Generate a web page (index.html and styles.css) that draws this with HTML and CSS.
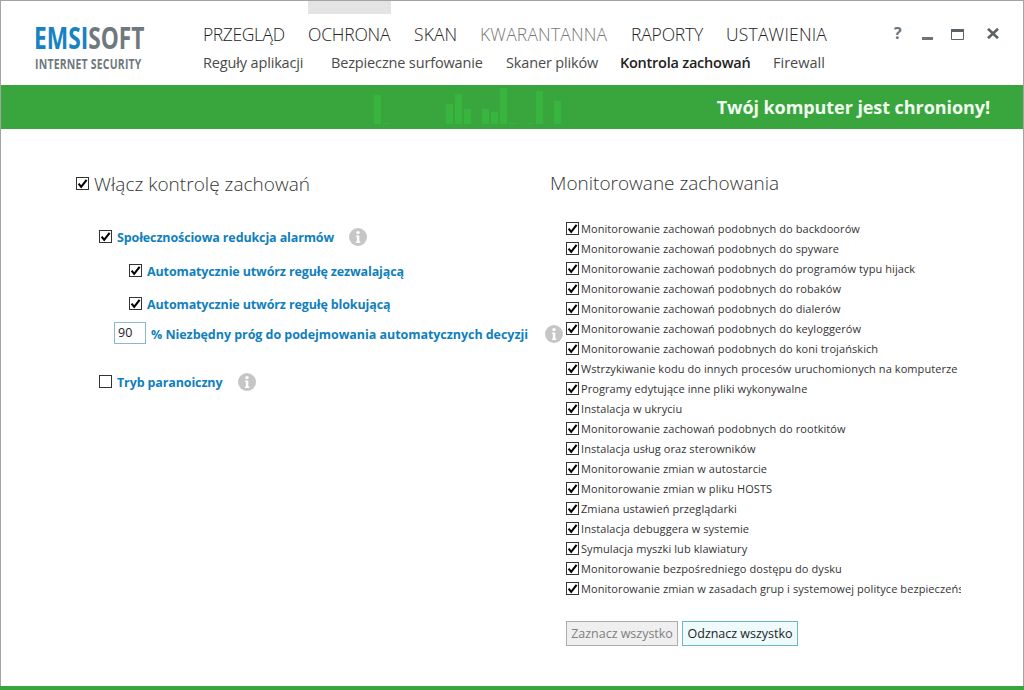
FILE: index.html
```html
<!DOCTYPE html>
<html lang="pl">
<head>
<meta charset="utf-8">
<title>Emsisoft Internet Security</title>
<link rel="stylesheet" href="styles.css">
</head>
<body>
<svg class="defs" width="0" height="0" aria-hidden="true">
  <symbol id="chk" viewBox="0 0 13 13"><path d="M2.6 6.6 5.2 9.8 10.6 2.9" fill="none" stroke="#000" stroke-width="2.1"/></symbol>
  <symbol id="info" viewBox="0 0 18 18"><circle cx="9" cy="9" r="9" fill="#c6c6c6"/><circle cx="9" cy="4.6" r="1.7" fill="#fff"/><path d="M6.9 7.6h3.4v6h1v1.4H6.9v-1.4h1v-4.6h-1z" fill="#fff"/></symbol>
</svg>
<div class="window">
  <header class="top">
    <div class="logo">
      <div class="logo-main"><span class="blue">EMSI</span>SOFT</div>
      <div class="logo-sub">INTERNET SECURITY</div>
    </div>
    <div class="navs">
      <nav class="nav">
        <a class="n1">PRZEGLĄD</a>
        <a class="n2 on">OCHRONA</a>
        <a class="n3">SKAN</a>
        <a class="n4 dim">KWARANTANNA</a>
        <a class="n5">RAPORTY</a>
        <a class="n6">USTAWIENIA</a>
      </nav>
      <nav class="sub">
        <a class="s1">Reguły aplikacji</a>
        <a class="s2">Bezpieczne surfowanie</a>
        <a class="s3">Skaner plików</a>
        <a class="s4 cur">Kontrola zachowań</a>
        <a class="s5">Firewall</a>
      </nav>
    </div>
    <div class="ctrls">
      <span class="help">?</span>
      <svg class="c-min" width="11" height="3"><rect width="11" height="3" fill="#6d7478"/></svg>
      <svg class="c-max" width="13" height="11"><path d="M.5.5h12v10H.5z" fill="none" stroke="#5b6367"/><rect width="13" height="3" fill="#5b6367"/></svg>
      <svg class="c-close" width="12" height="11" viewBox="0 0 12 11"><path d="M1 .8 11 10.2M11 .8 1 10.2" stroke="#5b6367" stroke-width="2.6" fill="none"/></svg>
    </div>
  </header>

  <section class="banner">
    <div class="bars">
      <i style="height:29px"></i><i style="height:1px"></i><i style="height:0"></i><i style="height:0"></i><i style="height:0"></i><i style="height:0"></i><i style="height:0"></i><i style="height:0"></i>
      <i style="height:20px"></i><i style="height:30px"></i><i style="height:15px"></i><i style="height:0"></i><i style="height:15px"></i><i style="height:12px"></i><i style="height:36px"></i><i style="height:1px"></i><i style="height:0"></i><i style="height:1px"></i><i style="height:33px"></i><i style="height:0"></i><i style="height:23px"></i>
    </div>
    <h1 class="status">Twój komputer jest chroniony!</h1>
  </section>

  <main class="content">
    <section class="left">
      <label class="master"><span class="cb"><svg><use href="#chk"/></svg></span><span>Włącz kontrolę zachowań</span></label>
      <div class="opt opt-a"><span class="cb"><svg><use href="#chk"/></svg></span><b class="lbl">Społecznościowa redukcja alarmów</b><svg class="info i-a"><use href="#info"/></svg></div>
      <div class="opt opt-b"><span class="cb"><svg><use href="#chk"/></svg></span><b class="lbl">Automatycznie utwórz regułę zezwalającą</b></div>
      <div class="opt opt-c"><span class="cb"><svg><use href="#chk"/></svg></span><b class="lbl">Automatycznie utwórz regułę blokującą</b></div>
      <div class="opt opt-d"><span class="num">90</span><b class="lbl lbl-d">% Niezbędny próg do podejmowania automatycznych decyzji</b><svg class="info i-d"><use href="#info"/></svg></div>
      <div class="opt opt-e"><span class="cb"></span><b class="lbl">Tryb paranoiczny</b><svg class="info i-e"><use href="#info"/></svg></div>
    </section>
    <section class="right">
      <h2 class="r-title">Monitorowane zachowania</h2>
      <ul class="list">
        <li><span class="cb"><svg><use href="#chk"/></svg></span><span class="t">Monitorowanie zachowań podobnych do backdoorów</span></li>
        <li><span class="cb"><svg><use href="#chk"/></svg></span><span class="t">Monitorowanie zachowań podobnych do spyware</span></li>
        <li><span class="cb"><svg><use href="#chk"/></svg></span><span class="t">Monitorowanie zachowań podobnych do programów typu hijack</span></li>
        <li><span class="cb"><svg><use href="#chk"/></svg></span><span class="t">Monitorowanie zachowań podobnych do robaków</span></li>
        <li><span class="cb"><svg><use href="#chk"/></svg></span><span class="t">Monitorowanie zachowań podobnych do dialerów</span></li>
        <li><span class="cb"><svg><use href="#chk"/></svg></span><span class="t">Monitorowanie zachowań podobnych do keyloggerów</span></li>
        <li><span class="cb"><svg><use href="#chk"/></svg></span><span class="t">Monitorowanie zachowań podobnych do koni trojańskich</span></li>
        <li><span class="cb"><svg><use href="#chk"/></svg></span><span class="t">Wstrzykiwanie kodu do innych procesów uruchomionych na komputerze</span></li>
        <li><span class="cb"><svg><use href="#chk"/></svg></span><span class="t">Programy edytujące inne pliki wykonywalne</span></li>
        <li><span class="cb"><svg><use href="#chk"/></svg></span><span class="t">Instalacja w ukryciu</span></li>
        <li><span class="cb"><svg><use href="#chk"/></svg></span><span class="t">Monitorowanie zachowań podobnych do rootkitów</span></li>
        <li><span class="cb"><svg><use href="#chk"/></svg></span><span class="t">Instalacja usług oraz sterowników</span></li>
        <li><span class="cb"><svg><use href="#chk"/></svg></span><span class="t">Monitorowanie zmian w autostarcie</span></li>
        <li><span class="cb"><svg><use href="#chk"/></svg></span><span class="t">Monitorowanie zmian w pliku HOSTS</span></li>
        <li><span class="cb"><svg><use href="#chk"/></svg></span><span class="t">Zmiana ustawień przeglądarki</span></li>
        <li><span class="cb"><svg><use href="#chk"/></svg></span><span class="t">Instalacja debuggera w systemie</span></li>
        <li><span class="cb"><svg><use href="#chk"/></svg></span><span class="t">Symulacja myszki lub klawiatury</span></li>
        <li><span class="cb"><svg><use href="#chk"/></svg></span><span class="t">Monitorowanie bezpośredniego dostępu do dysku</span></li>
        <li><span class="cb"><svg><use href="#chk"/></svg></span><span class="t">Monitorowanie zmian w zasadach grup i systemowej polityce bezpieczeństwa</span></li>
      </ul>
      <div class="btns">
        <button class="btn btn-off" type="button">Zaznacz wszystko</button>
        <button class="btn btn-on" type="button">Odznacz wszystko</button>
      </div>
    </section>
  </main>
  <footer class="foot"></footer>
</div>
</body>
</html>
```
FILE: styles.css
```css
* { box-sizing: border-box; }
html, body { margin: 0; padding: 0; background: #fff; }
body { width: 1024px; height: 690px; overflow: hidden; font-family: "Open Sans", "Noto Sans", sans-serif; color: #333; }
.defs { display: block; height: 0; }
.window { width: 1024px; height: 690px; display: flex; flex-direction: column; border: 1px solid #a3a3a3; border-bottom: 0; background: #fff; }

.top { height: 84px; display: flex; flex: none; }
.logo { width: 202px; padding: 20px 0 0 33px; flex: none; }
.logo-main { font: 700 31px/32px "Open Sans", sans-serif; color: #6f787d; transform: scaleX(.733); transform-origin: left top; white-space: nowrap; }
.blue { color: #1583c1; }
.logo-sub { margin: 3px 0 0 1px; font: 700 14px/16px "Open Sans", sans-serif; color: #6f787d; transform: scaleX(.745); transform-origin: left top; white-space: nowrap; letter-spacing: .3px; }

.navs { flex: 1; display: flex; flex-direction: column; min-width: 0; }
.nav { display: flex; height: 47px; flex: none; }
.nav a { font-size: 17.5px; font-weight: 300; line-height: 24px; padding-top: 21px; height: 47px; white-space: nowrap; color: #222; }
.nav a.on { box-shadow: inset 0 13px 0 #e4e4e4; }
.nav a.dim { color: #777; }
.n1 { width: 105px; letter-spacing: -.4px; }
.n2 { width: 83px; letter-spacing: -.2px; margin-right: 23px; }
.n3 { width: 66px; letter-spacing: .1px; }
.n4 { width: 151px; letter-spacing: .18px; }
.n5 { width: 95px; letter-spacing: -.17px; }
.n6 { letter-spacing: .2px; }
.sub { display: flex; margin-top: 5px; }
.sub a { font-size: 14.5px; line-height: 20px; white-space: nowrap; color: #4a4a4a; letter-spacing: -.15px; }
.sub a.cur { color: #222; font-weight: 600; letter-spacing: -.24px; }
.s1 { width: 128px; letter-spacing: .05px; }
.s2 { width: 175px; }
.s3 { width: 114px; }
.s4 { width: 153px; }
.sub .s5 { letter-spacing: 0; }

.ctrls { width: 130px; flex: none; position: relative; }
.help { position: absolute; left: 1px; top: 21px; font: 700 16px/22px "Open Sans", sans-serif; color: #6d7478; }
.c-min { position: absolute; left: 29px; top: 36px; }
.c-max { position: absolute; left: 58px; top: 28px; }
.c-close { position: absolute; left: 94px; top: 27px; }

.banner { height: 44px; flex: none; background: #38a53d; display: flex; align-items: flex-end; justify-content: space-between; padding: 0 33px 5px 373px; }
.bars { display: flex; gap: 2px; align-items: flex-end; height: 38px; }
.bars i { display: block; width: 7px; background: #37b53e; }
.status { margin: 0 0 5px; font-size: 18px; line-height: 26px; font-weight: 700; color: #f2fbf1; letter-spacing: -.07px; align-self: center; position: relative; top: 5px; }

.content { flex: 1; display: flex; min-height: 0; }
.left { width: 549px; flex: none; padding: 42px 0 0 75px; }
.master { display: flex; align-items: center; gap: 5px; font-size: 19px; font-weight: 300; line-height: 26px; color: #333; letter-spacing: .03px; height: 26px; }
.cb { width: 13px; height: 13px; flex: none; border: 1px solid #333; background: #fff; display: block; position: relative; }
.cb svg { position: absolute; left: -1px; top: -1px; width: 13px; height: 13px; }
.master .cb { margin-top: -2px; }
.opt { display: flex; align-items: center; height: 20px; white-space: nowrap; }
.lbl { font-size: 12.5px; font-weight: 700; color: #0f80bd; letter-spacing: -.13px; margin-top: 2px; }
.lbl-d { letter-spacing: -.05px; }
.opt .cb { margin-right: 5px; }
.opt-a { margin: 29px 0 0 23px; }
.opt-b { margin: 14px 0 0 53px; }
.opt-c { margin: 13px 0 0 53px; }
.opt-d { margin: 9px 0 0 38px; height: 22px; }
.opt-e { margin: 27px 0 0 23px; }
.num { width: 32px; height: 22px; border: 1px solid #8db7cf; font-size: 12.5px; line-height: 20px; padding-left: 3px; color: #222; margin-right: 5px; flex: none; }
.info { width: 18px; height: 18px; flex: none; margin-top: 2px; }
.i-a { margin-left: 15px; }
.i-d { margin-left: 17px; }
.i-e { margin-left: 16px; }

.right { flex: 1; min-width: 0; }
.r-title { margin: 41px 0 0; font-size: 19px; font-weight: 300; line-height: 26px; color: #333; letter-spacing: 0; }
.list { list-style: none; margin: 23px 0 0; padding: 0 0 0 16px; }
.list li { display: flex; align-items: center; height: 20px; width: 395px; overflow: hidden; }
.list .cb { margin-top: -1px; }
.list .t { font-size: 11px; line-height: 20px; color: #333; margin-left: 2px; white-space: nowrap; letter-spacing: .08px; }
.btns { display: flex; gap: 4px; margin: 22px 0 0 16px; }
.btn { height: 25px; padding: 0; font: 12.5px/23px "Open Sans", sans-serif; letter-spacing: -.02px; }
.btn-off { width: 112px; background: #efefef; border: 1px solid #adadad; color: #808080; }
.btn-on { width: 116px; background: #effafd; border: 1px solid #6fb7c6; color: #222; }

.foot { height: 4px; flex: none; background: #38a53d; margin: 0 -1px; }
```
